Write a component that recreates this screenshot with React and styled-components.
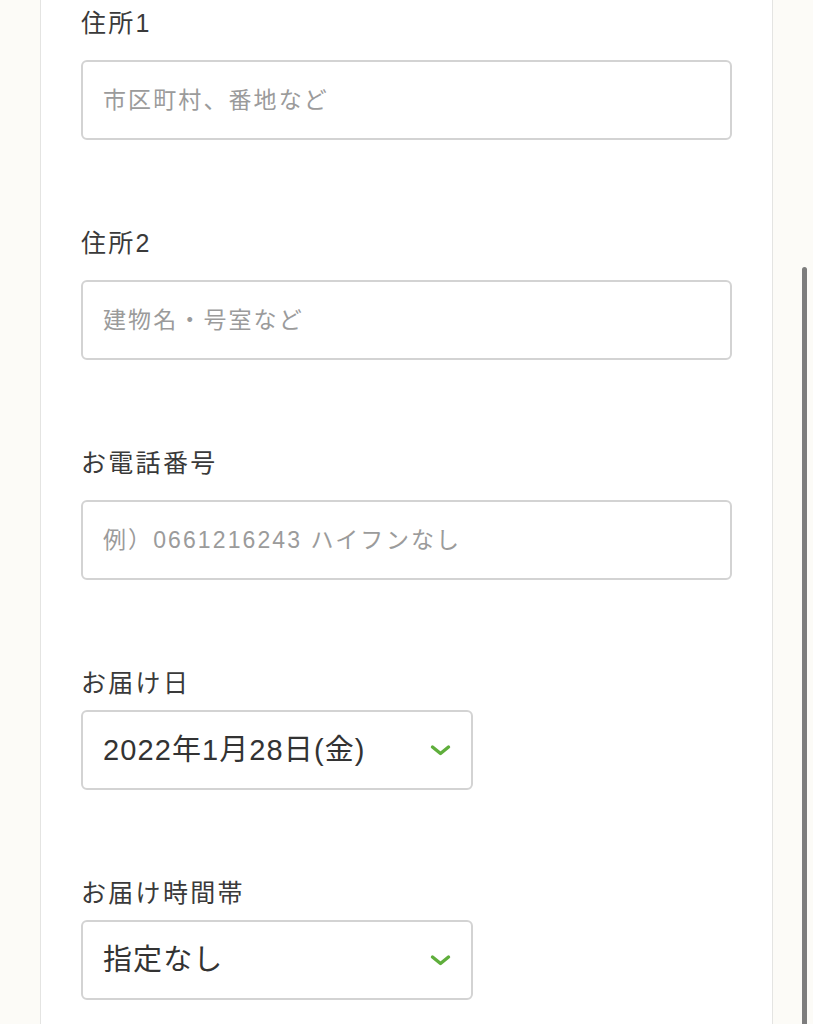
import React from "react";
import styled, { createGlobalStyle } from "styled-components";

const Global = createGlobalStyle`
  html, body { margin: 0; padding: 0; background: #fcfbf7; }
  body { font-family: "Liberation Sans", "Noto Sans CJK JP", sans-serif; }
  * { box-sizing: border-box; }
`;

const Page = styled.div`
  display: flex;
  width: 813px;
  height: 1024px;
  overflow: hidden;
  background: #fcfbf7;
`;

const Gutter = styled.div`
  width: 40px;
  flex: none;
`;

const RightGutter = styled.div`
  width: 40px;
  flex: none;
  display: flex;
  padding-left: 29px;
  padding-top: 267px;
`;

const Thumb = styled.div`
  width: 5px;
  height: 800px;
  background: #7d7d7d;
  border-radius: 3px;
`;

const Card = styled.div`
  width: 733px;
  flex: none;
  background: #fff;
  border-left: 1px solid #e4e4e2;
  border-right: 1px solid #e4e4e2;
  padding: 7px 0 0 40px;
  display: flex;
  flex-direction: column;
`;

const Field = styled.div`
  display: flex;
  flex-direction: column;
  margin-bottom: 87px;
`;

const Label = styled.label`
  font-size: 25px;
  line-height: 32px;
  color: #3a3a3a;
  letter-spacing: 2.3px;
  margin-bottom: ${(p) => (p.$select ? "11px" : "21px")};
`;

const Box = styled.div`
  height: 80px;
  width: ${(p) => (p.$select ? "392px" : "651px")};
  border: 2px solid #d3d3d3;
  border-radius: 6px;
  background: #fff;
  display: flex;
  align-items: center;
  justify-content: space-between;
  padding: 0 20px 0 20px;
`;

const Placeholder = styled.span`
  font-size: 23px;
  line-height: 30px;
  color: #9b9b9b;
  letter-spacing: 2.1px;
`;

const Value = styled.span`
  font-size: 29px;
  line-height: 36px;
  color: #333;
  letter-spacing: 1.1px;
`;

const Chevron = () => (
  <svg width="22" height="12" viewBox="0 0 22 12">
    <path d="M3.5 3 L11.5 9.5 L19.5 3" fill="none" stroke="#5fae3c" strokeWidth="3.4" strokeLinecap="round" strokeLinejoin="round" />
  </svg>
);

const TextField = ({ label, placeholder }) => (
  <Field>
    <Label>{label}</Label>
    <Box>
      <Placeholder>{placeholder}</Placeholder>
    </Box>
  </Field>
);

const SelectField = ({ label, value }) => (
  <Field>
    <Label $select>{label}</Label>
    <Box $select>
      <Value>{value}</Value>
      <Chevron />
    </Box>
  </Field>
);

export default function App() {
  return (
    <Page>
      <Global />
      <Gutter />
      <Card>
        <TextField label="住所1" placeholder="市区町村、番地など" />
        <TextField label="住所2" placeholder="建物名・号室など" />
        <TextField label="お電話番号" placeholder="例）0661216243 ハイフンなし" />
        <SelectField label="お届け日" value="2022年1月28日(金)" />
        <SelectField label="お届け時間帯" value="指定なし" />
      </Card>
      <RightGutter>
        <Thumb />
      </RightGutter>
    </Page>
  );
}
